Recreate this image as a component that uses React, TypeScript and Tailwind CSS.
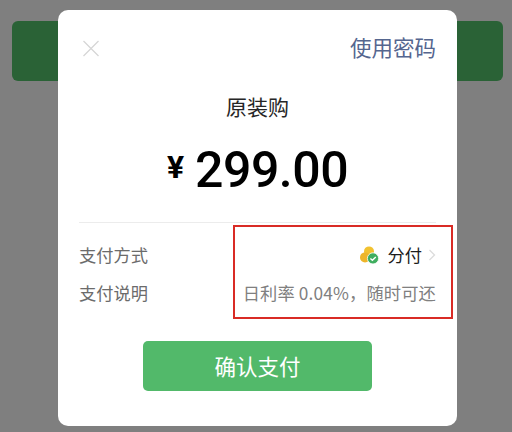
import React from 'react';

const cjk = "font-['Noto_Sans_CJK_SC',sans-serif]";

const FenfuIcon = () => (
  <svg width="19" height="19" viewBox="0 0 19 19" className="mr-[8px]">
    <circle cx="9" cy="5.4" r="5" fill="#f2c230" />
    <circle cx="5" cy="11.4" r="5" fill="#eeb52a" />
    <circle cx="13" cy="12.4" r="5.6" fill="#3fae5f" stroke="#fff" strokeWidth="0.8" />
    <path d="M10.4 12.4 L12.4 14.2 L15.8 11" fill="none" stroke="#fff" strokeWidth="1.4" />
  </svg>
);

const App = () => {
  return (
    <div className={`relative w-[512px] h-[432px] overflow-hidden bg-[#7f7f7f] pt-[21px] px-[12px] ${cjk}`}>
      <div className="h-[60px] w-[491px] rounded-[6px] bg-[#2a6236]" />

      <div className="absolute left-[58px] top-[10px] w-[399px] h-[416px] rounded-[10px] bg-white flex flex-col px-[21px]">
        <div className="flex items-center justify-between h-[24px] mt-[25px]">
          <svg width="18" height="17" viewBox="0 0 18 17" className="ml-[3px] mt-[2px]">
            <path d="M1.5 1 L16.5 16 M16.5 1 L1.5 16" stroke="#d6d6d6" strokeWidth="1.3" fill="none" />
          </svg>
          <span className="text-[21.5px] leading-[24px] text-[#55668f]">使用密码</span>
        </div>

        <div className="mt-[32px] text-center text-[21px] leading-[30px] text-[#262626]">原装购</div>

        <div className="mt-[19px] flex items-center justify-center h-[60px]">
          <span className="text-[32px] leading-none font-bold text-black font-['Roboto',sans-serif] mr-[11px] -mt-[7px]">¥</span>
          <span className="text-[50px] leading-none font-medium text-black font-['Roboto',sans-serif] tracking-[-0.5px]">299.00</span>
        </div>

        <div className="mt-[22px] border-t border-[#ececec]" />

        <div className="mt-[19px] flex items-center justify-between h-[26px] text-[17.25px] text-[#6b6b6b]">
          <span>支付方式</span>
          <div className="flex items-center">
            <FenfuIcon />
            <span className="text-[#1c1c1c]">分付</span>
            <svg width="8" height="12" viewBox="0 0 8 12" className="ml-[6px]">
              <path d="M1.5 1 L6.5 6 L1.5 11" fill="none" stroke="#dcdcdc" strokeWidth="1.3" />
            </svg>
          </div>
        </div>
        <div className="mt-[12px] flex items-center justify-between h-[26px] text-[17.25px] text-[#6b6b6b]">
          <span>支付说明</span>
          <span className="text-[#808080] tracking-[0.15px]">日利率 0.04%，随时可还</span>
        </div>

        <button className="mt-[35px] mx-auto w-[229px] h-[50px] rounded-[5px] bg-[#52b96a] text-white text-[21.5px]">确认支付</button>
      </div>

      <div className="absolute left-[233px] top-[225px] w-[220px] h-[94px] border-2 border-[#d92b25]" />
    </div>
  );
};

export default App;
